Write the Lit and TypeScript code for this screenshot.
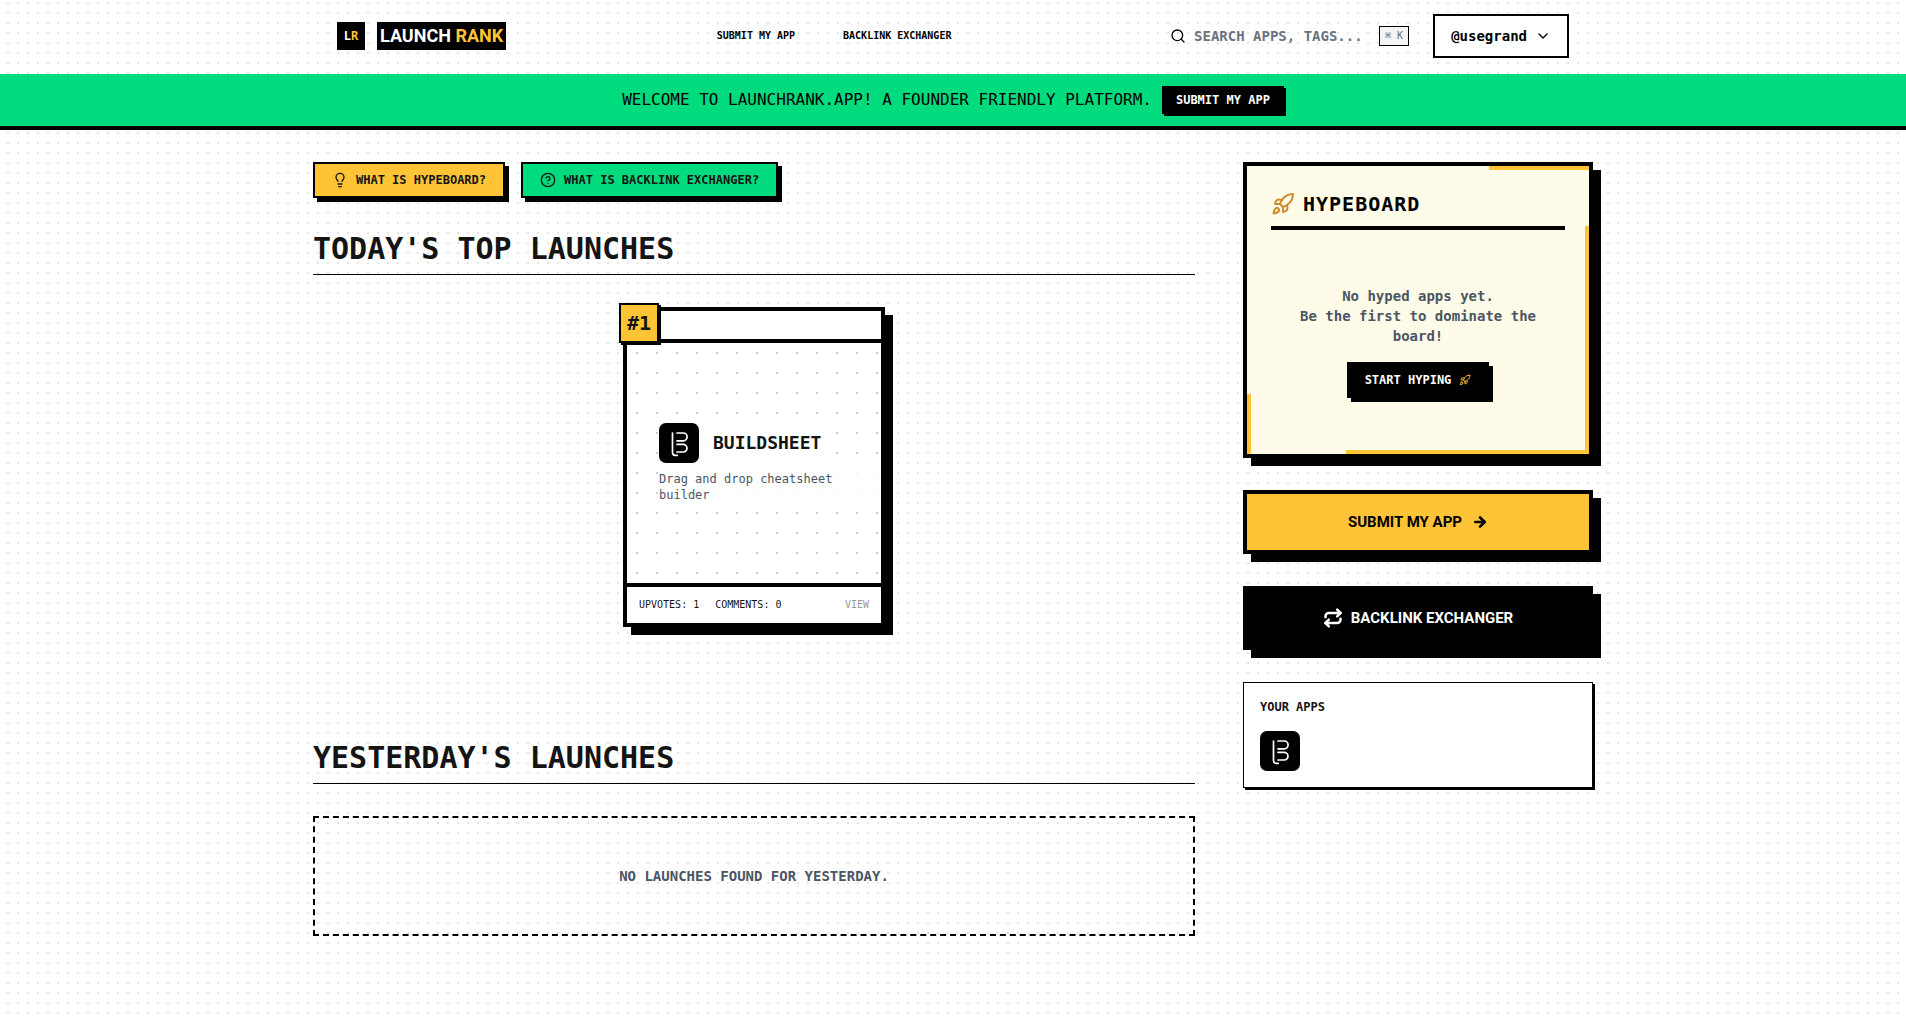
import { LitElement, html, css, svg } from "lit";
import { customElement, property } from "lit/decorators.js";

const icons: Record<string, unknown> = {
  bulb: svg`<path d="M15 14c.2-1 .7-1.7 1.5-2.5 1-.9 1.5-2.2 1.5-3.5A6 6 0 0 0 6 8c0 1 .2 2.2 1.5 3.5.7.7 1.3 1.5 1.5 2.5"/><path d="M9 18h6"/><path d="M10 22h4"/>`,
  help: svg`<circle cx="12" cy="12" r="10"/><path d="M9.09 9a3 3 0 0 1 5.83 1c0 2-3 3-3 3"/><path d="M12 17h.01"/>`,
  search: svg`<circle cx="11" cy="11" r="8"/><path d="m21 21-4.3-4.3"/>`,
  chevron: svg`<path d="m6 9 6 6 6-6"/>`,
  rocket: svg`<path d="M4.5 16.5c-1.5 1.26-2 5-2 5s3.74-.5 5-2c.71-.84.7-2.13-.09-2.91a2.18 2.18 0 0 0-2.91-.09z"/><path d="m12 15-3-3a22 22 0 0 1 2-3.95A12.88 12.88 0 0 1 22 2c0 2.72-.78 7.5-6 11a22.35 22.35 0 0 1-4 2z"/><path d="M9 12H4s.55-3.03 2-4c1.62-1.08 5 0 5 0"/><path d="M12 15v5s3.03-.55 4-2c1.08-1.62 0-5 0-5"/>`,
  arrow: svg`<path d="M5 12h14"/><path d="m12 5 7 7-7 7"/>`,
  repeat: svg`<path d="m17 2 4 4-4 4"/><path d="M3 11v-1a4 4 0 0 1 4-4h14"/><path d="m7 22-4-4 4-4"/><path d="M21 13v1a4 4 0 0 1-4 4H3"/>`,
};

@customElement("line-icon")
class LineIcon extends LitElement {
  @property() name = "";
  @property({ type: Number }) size = 16;
  @property({ type: Number }) weight = 2;

  static styles = css`
    :host { display: inline-flex; flex: none; }
    .glyph { display: block; fill: none; stroke: currentColor; stroke-linecap: round; stroke-linejoin: round; overflow: visible; }
  `;

  render() {
    return html`<svg class="glyph" width=${this.size} height=${this.size} viewBox="0 0 24 24" stroke-width=${this.weight} aria-hidden="true">${icons[this.name]}</svg>`;
  }
}

@customElement("app-tile")
class AppTile extends LitElement {
  static styles = css`
    :host { display: inline-flex; flex: none; }
    .tile { display: block; }
    .stroke { fill: none; stroke: #fff; stroke-width: 1.7; stroke-linecap: round; stroke-linejoin: round; }
  `;

  render() {
    return html`<svg class="tile" width="40" height="40" viewBox="0 0 40 40" role="img" aria-label="Buildsheet">
      <rect width="40" height="40" rx="7" fill="#000"/>
      <g class="stroke">
        <path d="M13.500 10v19.500q0 2.800 2.800 2.800h2"/>
        <path d="M18 10h6.200a3.900 3.900 0 0 1 0 7.800H18"/>
        <path d="M18 21.400h6.200a3.800 3.800 0 0 1 0 7.600H18"/>
      </g>
    </svg>`;
  }
}

@customElement("app-root")
class AppRoot extends LitElement {
  static styles = css`
    :host {
      --mono: "DejaVu Sans Mono", "Liberation Mono", monospace;
      --sans: Roboto, "Liberation Sans", sans-serif;
      --yellow: #ffc436;
      --green: #00dc7d;
      --ink: #141414;
      display: block;
      min-height: 100vh;
      background: #fff radial-gradient(#e5e5e5 1px, transparent 1px) 3px 8px / 10px 10px;
      font-family: var(--mono);
      font-size: 12px;
      line-height: 16px;
      color: var(--ink);
    }
    * { box-sizing: border-box; }
    h1, h2, h3, p { margin: 0; }
    a { color: inherit; text-decoration: none; }
    button, input { font: inherit; color: inherit; border: 0; border-radius: 0; margin: 0; padding: 0; background: none; }
    button { cursor: pointer; }

    .wrap { max-width: 1280px; margin: 0 auto; }
    .topbar { display: flex; align-items: center; justify-content: space-between; padding: 14px 24px 16px; }
    .brand { display: flex; align-items: center; gap: 12px; }
    .brand-mark { display: grid; place-items: center; width: 28px; height: 28px; background: #000; color: #fff; font-weight: 700; }
    .brand-name { padding: 0 3px; background: #000; color: #fff; font: 700 18px/28px var(--sans); }
    .accent { color: var(--yellow); }
    .links { display: flex; gap: 48px; font-size: 10px; font-weight: 700; color: #000; }
    .tools { display: flex; align-items: center; gap: 24px; }
    .search { display: flex; align-items: center; gap: 8px; padding-left: 8px; color: #000; }
    .search-input { width: 177px; font-size: 14px; font-weight: 700; line-height: 20px; outline: 0; }
    .search-input::placeholder { color: #6b7280; opacity: 1; }
    .keys { padding: 1px 5px; border: 1px solid #000; background: #f3f4f6; color: #6b7280; font-family: var(--mono); font-size: 10px; }
    .account { display: flex; align-items: center; gap: 8px; height: 44px; padding: 0 16px; border: 2px solid #000; background: #fff; color: #000; font-size: 14px; font-weight: 700; }

    .banner { display: flex; align-items: center; justify-content: center; gap: 10px; padding: 12px 24px; border-bottom: 4px solid #000; background: var(--green); font-size: 16px; color: #000; }
    .banner-link { padding: 6px 14px; background: #000; box-shadow: 2px 2px 0 #000; color: #fff; font-size: 12px; font-weight: 700; }

    .page { display: grid; grid-template-columns: minmax(0, 1fr) 350px; gap: 48px; padding: 32px 0; align-items: start; }
    .hints { display: flex; gap: 16px; margin-bottom: 32px; }
    .hint { display: flex; align-items: center; gap: 8px; height: 36px; padding: 0 17px; border: 2px solid #000; box-shadow: 4px 4px 0 #000; font-weight: 700; }
    .hint-yellow { background: var(--yellow); }
    .hint-green { background: var(--green); }
    .section-title { padding-bottom: 6px; border-bottom: 1px solid #000; margin-bottom: 32px; font-size: 30px; line-height: 38px; }
    .launches { display: flex; justify-content: center; padding-bottom: 112px; }

    .card { position: relative; display: flex; flex-direction: column; width: 262px; height: 320px; border: 4px solid #000; background: #fff; box-shadow: 8px 8px 0 #000; }
    .card-strip { height: 32px; border-bottom: 4px solid #000; }
    .rank { position: absolute; top: -8px; left: -8px; display: grid; place-items: center; width: 40px; height: 40px; border: 2px solid #000; background: var(--yellow); box-shadow: 2px 2px 0 #000; font-size: 20px; font-weight: 700; }
    .card-body { flex: 1; display: flex; flex-direction: column; justify-content: center; gap: 8px; padding-left: 32px; background: radial-gradient(#ccc 1px, transparent 1px) 0 0 / 20px 20px; }
    .card-head { display: flex; align-items: center; align-self: start; gap: 14px; padding-right: 4px; background: #fff; }
    .card-name { font-size: 18px; line-height: 28px; }
    .card-text { background: rgba(255, 255, 255, 0.8); color: #4b5563; }
    .card-foot { display: flex; align-items: center; gap: 16px; height: 40px; padding: 0 12px; border-top: 4px solid #000; font-size: 10px; }
    .card-view { margin-left: auto; color: #999; }

    .empty { padding: 48px; border: 2px dashed #000; text-align: center; font-size: 14px; font-weight: 700; line-height: 20px; color: #4b5563; }

    .side { display: grid; gap: 32px; }
    .hype { position: relative; padding: 24px; border: 4px solid #000; background: #fefce8; box-shadow: 8px 8px 0 #000; }
    .hype-title { display: flex; align-items: center; gap: 8px; padding-bottom: 8px; border-bottom: 4px solid #000; margin-bottom: 24px; font-size: 20px; line-height: 28px; letter-spacing: 0.05em; color: #000; }
    .hype-icon { color: #d08a2c; }
    .hype-body { display: flex; flex-direction: column; align-items: center; gap: 16px; padding: 32px 16px; text-align: center; }
    .hype-text { font-size: 14px; font-weight: 700; line-height: 20px; color: #4b5563; }
    .hype-button { display: flex; align-items: center; gap: 8px; height: 36px; padding: 0 18px; background: #000; box-shadow: 4px 4px 0 #000; color: #fff; font-weight: 700; }
    .trace { position: absolute; background: var(--yellow); }
    .trace-top { top: 0; right: 0; width: 100px; height: 4px; }
    .trace-right { top: 60px; right: 0; bottom: 0; width: 4px; }
    .trace-bottom { right: 0; bottom: 0; width: 243px; height: 4px; }
    .trace-left { left: 0; bottom: 0; width: 4px; height: 60px; }

    .cta { display: flex; align-items: center; justify-content: center; gap: 8px; height: 64px; border: 4px solid #000; box-shadow: 8px 8px 0 #000; font: 700 15px/24px var(--sans); }
    .cta-submit { gap: 10px; background: var(--yellow); color: #000; }
    .cta-exchange { background: #000; color: #fff; }

    .mine { display: grid; gap: 16px; padding: 16px; border: 1px solid #000; background: #fff; box-shadow: 2px 2px 0 #000; }
    .mine-title { font-size: 12px; line-height: 16px; }
    .mine-link { display: inline-flex; justify-self: start; }
  `;

  render() {
    return html`
      <header class="wrap topbar">
        <a class="brand" href="#">
          <span class="brand-mark"><span>L<span class="accent">R</span></span></span>
          <span class="brand-name">LAUNCH <span class="accent">RANK</span></span>
        </a>
        <nav class="links">
          <a href="#submit">SUBMIT MY APP</a>
          <a href="#exchange">BACKLINK EXCHANGER</a>
        </nav>
        <div class="tools">
          <label class="search">
            <line-icon name="search"></line-icon>
            <input class="search-input" type="text" aria-label="Search apps and tags" placeholder="SEARCH APPS, TAGS..." />
            <kbd class="keys">⌘ K</kbd>
          </label>
          <button class="account" type="button">@usegrand <line-icon name="chevron"></line-icon></button>
        </div>
      </header>

      <div class="banner">
        <span>WELCOME TO LAUNCHRANK.APP! A FOUNDER FRIENDLY PLATFORM.</span>
        <a class="banner-link" href="#submit">SUBMIT MY APP</a>
      </div>

      <div class="wrap page">
        <main>
          <div class="hints">
            <button class="hint hint-yellow" type="button"><line-icon name="bulb"></line-icon>WHAT IS HYPEBOARD?</button>
            <button class="hint hint-green" type="button"><line-icon name="help"></line-icon>WHAT IS BACKLINK EXCHANGER?</button>
          </div>

          <h2 class="section-title">TODAY'S TOP LAUNCHES</h2>
          <div class="launches">
            <article class="card">
              <div class="card-strip"></div>
              <span class="rank">#1</span>
              <div class="card-body">
                <div class="card-head"><app-tile></app-tile><h3 class="card-name">BUILDSHEET</h3></div>
                <p class="card-text">Drag and drop cheatsheet builder</p>
              </div>
              <div class="card-foot">
                <span>UPVOTES: 1</span>
                <span>COMMENTS: 0</span>
                <a class="card-view" href="#buildsheet">VIEW</a>
              </div>
            </article>
          </div>

          <h2 class="section-title">YESTERDAY'S LAUNCHES</h2>
          <p class="empty">NO LAUNCHES FOUND FOR YESTERDAY.</p>
        </main>

        <aside class="side">
          <section class="hype">
            <h2 class="hype-title"><line-icon class="hype-icon" name="rocket" size="24"></line-icon>HYPEBOARD</h2>
            <div class="hype-body">
              <p class="hype-text">No hyped apps yet.<br />Be the first to dominate the board!</p>
              <button class="hype-button" type="button">START HYPING <line-icon class="accent" name="rocket" size="12"></line-icon></button>
            </div>
            <span class="trace trace-top"></span>
            <span class="trace trace-right"></span>
            <span class="trace trace-bottom"></span>
            <span class="trace trace-left"></span>
          </section>
          <a class="cta cta-submit" href="#submit">SUBMIT MY APP <line-icon name="arrow" size="16" weight="4"></line-icon></a>
          <a class="cta cta-exchange" href="#exchange"><line-icon name="repeat" size="20" weight="3"></line-icon>BACKLINK EXCHANGER</a>
          <section class="mine">
            <h3 class="mine-title">YOUR APPS</h3>
            <a class="mine-link" href="#buildsheet"><app-tile></app-tile></a>
          </section>
        </aside>
      </div>
    `;
  }
}
